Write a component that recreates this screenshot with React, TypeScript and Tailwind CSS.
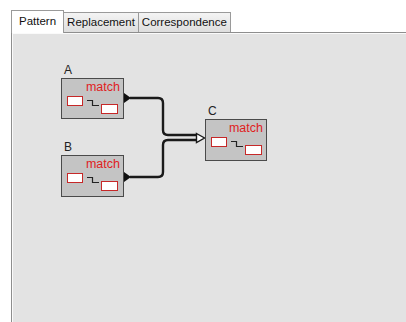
const font = { fontFamily: '"Liberation Sans", Arial, sans-serif' }

interface NodeProps {
    label: string;
    x: number;
    y: number;
    w: number;
    h: number;
}

// page coords -> panel padding box (panel starts at x=12, y=32)
function MatchNode({ label, x, y, w, h }: NodeProps) {
    return (
        <div className="absolute" style={{ left: x - 12, top: y - 32 - 15 }}>
            <div className="pl-[3px] h-[15px] text-[12px] leading-[15px] text-[#222]">{label}</div>
            <div className="relative bg-[#c4c4c4] border border-[#4a4a4a]" style={{ width: w, height: h }}>
                <span className="absolute right-[3px] top-[1px] text-[12.5px] leading-[14px] text-[#e01e1e]">match</span>
                <div className="absolute left-[5px] top-[17px] w-[16px] h-[10px] bg-white border border-[#c62828]" />
                <svg className="absolute left-[24px] top-[20px]" width="14" height="8" viewBox="0 0 14 8">
                    <path d="M1 1.5 H6.5 V6.5 H13" fill="none" stroke="#222" strokeWidth="1.2" />
                </svg>
                <div className="absolute left-[39px] top-[25px] w-[17px] h-[10px] bg-white border border-[#c62828]" />
            </div>
        </div>
    )
}

export default function App() {
    return (
        <div className="w-[406px] h-[322px] bg-white flex flex-col overflow-hidden" style={font}>
            <div className="flex items-end pl-[11px] pt-[10px] h-[32px] shrink-0">
                <div className="relative z-10 h-[23px] px-[7px] bg-white border border-b-0 border-[#9a9a9a] text-[11.5px] leading-[20px] text-[#111] -mb-[1px]">
                    Pattern
                </div>
                <div className="h-[20px] px-[3px] bg-gradient-to-b from-[#f4f4f4] to-[#dedede] border border-l-0 border-b-0 border-[#9a9a9a] text-[11.5px] leading-[19px] text-[#111]">
                    Replacement
                </div>
                <div className="h-[20px] px-[3px] bg-gradient-to-b from-[#f4f4f4] to-[#dedede] border border-l-0 border-b-0 border-[#9a9a9a] text-[11.5px] leading-[19px] text-[#111]">
                    Correspondence
                </div>
            </div>
            <div className="relative flex-1 ml-[11px] bg-[#e3e3e3] border-l border-t border-[#8e8e8e] shadow-[inset_1px_1px_0_#fafafa]">
                <svg className="absolute left-[-12px] top-[-32px]" width="406" height="322" viewBox="0 0 406 322">
                    <path d="M124 92 L131 97 L124 102 Z" fill="#111" />
                    <path d="M124 171 L131 176 L124 181 Z" fill="#111" />
                    <path d="M130 97 H158 Q163 97 163 102 V129 Q163 134 168 134 H197" fill="none" stroke="#1a1a1a" strokeWidth="2.4" />
                    <path d="M130 176 H158 Q163 176 163 171 V144 Q163 139 168 139 H197" fill="none" stroke="#1a1a1a" strokeWidth="2.4" />
                    <path d="M196.5 132.5 L204.5 137 L196.5 141.5 Z" fill="#fff" stroke="#1a1a1a" strokeWidth="1.4" />
                </svg>
                <MatchNode label="A" x={61} y={77} w={63} h={41} />
                <MatchNode label="B" x={61} y={154} w={63} h={42} />
                <MatchNode label="C" x={205} y={118} w={62} h={42} />
            </div>
        </div>
    )
}
